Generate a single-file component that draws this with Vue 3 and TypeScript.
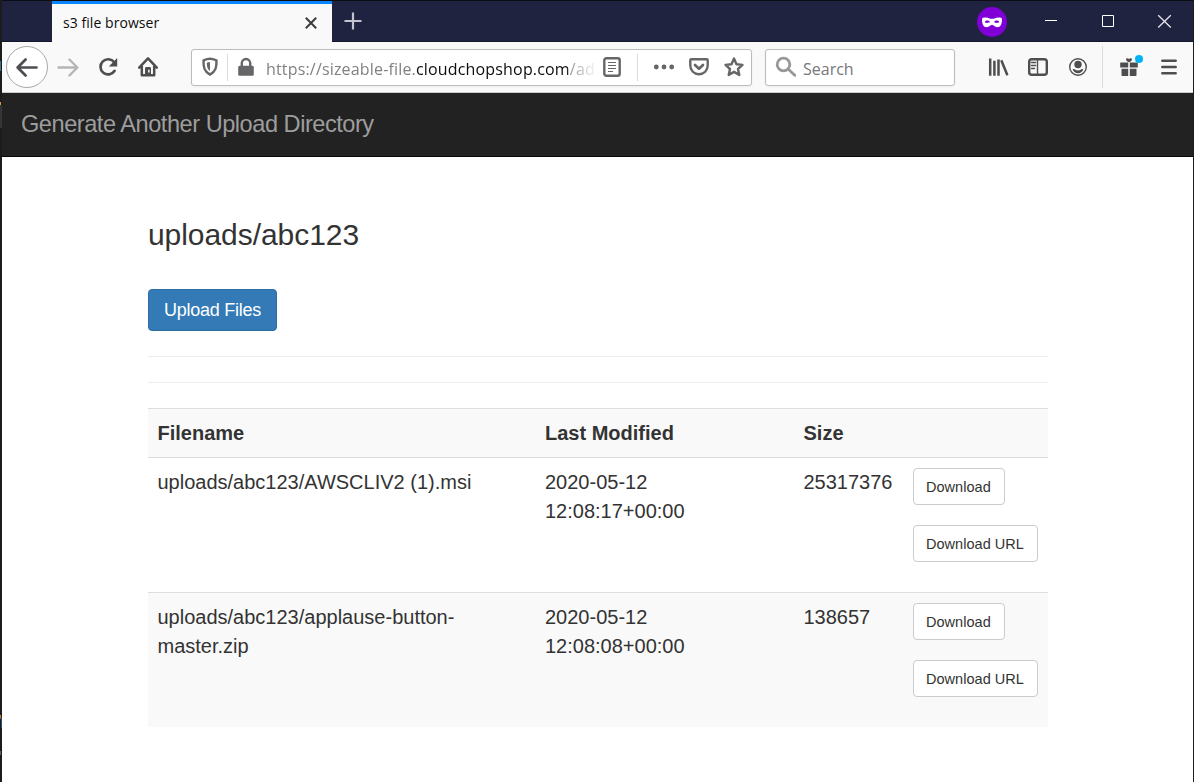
<script setup lang="ts">
interface FileRow {
  name: string
  modified: string
  size: string
}

const files: FileRow[] = [
  { name: 'uploads/abc123/AWSCLIV2 (1).msi', modified: '2020-05-12 12:08:17+00:00', size: '25317376' },
  { name: 'uploads/abc123/applause-button-master.zip', modified: '2020-05-12 12:08:08+00:00', size: '138657' },
]
</script>

<template>
  <div class="window">
    <header class="titlebar">
      <div class="tab">
        <span class="tab-title">s3 file browser</span>
        <svg class="tab-close" width="14" height="14" viewBox="0 0 14 14"><path d="M1.800 1.800 12.200 12.200M12.200 1.800 1.800 12.200" /></svg>
      </div>
      <svg class="new-tab" width="18" height="18" viewBox="0 0 18 18"><path d="M9 .5v17M.5 9h17" /></svg>
      <div class="controls">
        <svg class="mask" width="30" height="30" viewBox="0 0 30 30">
          <circle cx="15" cy="15" r="15" fill="#8000d7" />
          <path fill="#fff" fill-rule="evenodd" d="M5 12.200C5 10.700 6.500 10.400 8.500 10.400c3 0 4 1.400 6.500 1.400s3.500-1.400 6.500-1.400c2 0 3.500.3 3.500 1.800 0 4.500-1.300 8-4.800 8-2.600 0-3.400-2.400-5.200-2.400s-2.600 2.400-5.200 2.400C6.300 20.200 5 16.700 5 12.200ZM7.800 15c.8 1.200 4.200 1.200 5 0-.8-1.900-4.200-1.900-5 0Zm9.400 0c.8 1.200 4.200 1.200 5 0-.8-1.900-4.200-1.900-5 0Z" />
        </svg>
        <svg class="ctl" width="57" height="40" viewBox="0 0 57 40"><path d="M23 19.500h12" /></svg>
        <svg class="ctl" width="57" height="40" viewBox="0 0 57 40"><path d="M23.500 14.500h11v11h-11z" /></svg>
        <svg class="ctl thin" width="57" height="40" viewBox="0 0 57 40"><path d="M22.200 14.200 34.800 26.500M34.800 14.200 22.200 26.500" /></svg>
      </div>
    </header>

    <nav class="toolbar">
      <span class="back">
        <svg width="24" height="24" viewBox="0 0 24 24"><path class="line heavy" d="M21.500 12.500H3M10.600 4.500 2.600 12.500l8 8" /></svg>
      </span>
      <span class="slot">
        <svg class="dim" width="24" height="24" viewBox="0 0 24 24"><path class="line" d="M2.500 12.500H21M13.400 4.500l8 8-8 8" /></svg>
      </span>
      <span class="slot">
        <svg width="24" height="24" viewBox="0 0 24 24"><path class="line heavy" d="M18.600 15.800A7.600 7.600 0 1 1 18.200 7.300" /><path class="solid" d="M21.200 3v8.400h-8.400Z" /></svg>
      </span>
      <span class="slot">
        <svg width="24" height="24" viewBox="0 0 24 24"><path class="line home" d="M3.200 12.600 12 3.400l8.800 9.200M5.800 11.500v8.700h12.400v-8.700" /><path class="solid" d="M9 13.500c0-1 .5-1.500 1.500-1.500h3c1 0 1.500.5 1.500 1.500V20H9Z" /><path fill="#f9f9fa" d="M12.100 14.800h1.500v2.800h-1.500z" /></svg>
      </span>

      <div class="field urlbar">
        <svg class="shield" width="18" height="20" viewBox="0 0 18 20"><path class="line" d="M9 1.800c2.100 0 4.400.7 6.500 1.500.2 6.900-.7 11.100-6.500 14.300C3.200 14.400 2.300 10.200 2.500 3.300 4.600 2.500 6.900 1.800 9 1.800Z" /><path class="solid" d="M9 5v9.100C6.300 12 5.800 9.600 5.800 5.700 6.800 5.300 7.900 5 9 5Z" /></svg>
        <span class="bar first"></span>
        <svg class="lock" width="18" height="20" viewBox="0 0 18 20"><path class="line" d="M4.800 10V6.200a4.200 4.200 0 0 1 8.400 0V10" /><rect class="solid" x="1.200" y="8.800" width="15.600" height="10" rx="1.500" /></svg>
        <div class="url">https://sizeable-file.<span class="host">cloudchopshop.com</span>/ad</div>
        <svg class="reader" width="18" height="20" viewBox="0 0 18 20"><rect class="line" x="1.300" y="1.300" width="15.400" height="17.400" rx="2" /><path class="line fine" d="M5 5.500h8M5 8.500h8M5 11.500h8M5 14.500h5" /></svg>
        <span class="bar second"></span>
        <svg class="dots" width="22" height="20" viewBox="0 0 22 20"><circle class="solid" cx="3.300" cy="10" r="2.400" /><circle class="solid" cx="11" cy="10" r="2.400" /><circle class="solid" cx="18.700" cy="10" r="2.400" /></svg>
        <svg class="pocket" width="22" height="20" viewBox="0 0 22 20"><path class="line" d="M3.300 2.300h15.400c.6 0 1 .4 1 1V8.500c0 5-3.700 8.700-8.700 8.700S2.300 13.500 2.300 8.500V3.300c0-.6.400-1 1-1Z" /><path class="line heavy" d="M7 7.900l4 3.800 4-3.800" /></svg>
        <svg class="star" width="22" height="22" viewBox="0 0 22 22"><path class="line" d="m11 2.500 2.500 5.700 6 .7-4.500 4.100 1.300 6-5.300-3.100-5.300 3.100 1.300-6L2.500 8.900l6-.7Z" /></svg>
      </div>

      <div class="field search">
        <svg width="22" height="22" viewBox="0 0 22 22"><circle class="line" cx="8.500" cy="8.500" r="6.300" /><path class="line" d="m13.300 13.300 6.500 6" /></svg>
        <span>Search</span>
      </div>

      <span class="slot library">
        <svg width="24" height="24" viewBox="0 0 24 24"><path class="books" d="M4.200 3.500v17.200M8.400 5.800v14.900M12.500 4.500v16.200M15.300 5.300l6.100 15" /></svg>
      </span>
      <span class="slot">
        <svg width="24" height="24" viewBox="0 0 24 24"><rect class="line" x="3.200" y="4.200" width="17.600" height="15.600" rx="2.600" /><path class="line slim" d="M11.500 4v16M5.500 7.500h4M5.500 10.500h4M5.500 13.500h3" /></svg>
      </span>
      <span class="slot">
        <svg width="24" height="24" viewBox="0 0 24 24"><circle class="line slim" cx="12" cy="12" r="8.300" /><circle class="solid" cx="12" cy="9.500" r="3.700" /><path class="solid" d="M6.700 14.200c.7-.3 1.600-.2 2.200.3 1.800 1.400 4.400 1.400 6.200 0 .6-.5 1.500-.6 2.200-.3-.8 2.400-2.900 4-5.300 4s-4.500-1.600-5.300-4Z" /></svg>
      </span>
      <span class="separator"></span>
      <span class="slot gift">
        <svg width="24" height="24" viewBox="0 0 24 24"><path class="solid" d="M3.700 7.500h7.500v5H3.200V8c0-.3.200-.5.500-.5ZM12.800 7.500h7.500c.3 0 .5.200.5.500v4.500h-8ZM4.500 13.700h6.700V21H5.300c-.5 0-.8-.3-.8-.8ZM12.800 13.700h6.700v6.500c0 .5-.3.800-.8.800h-5.900ZM12 7.300c-2-.9-3.200-2-3-3.100.3-1.400 2.300-1.400 3-.1.700-1.300 2.700-1.300 3 .1.200 1.100-1 2.200-3 3.100Z" /></svg>
        <i class="badge"></i>
      </span>
      <span class="slot">
        <svg width="24" height="24" viewBox="0 0 24 24"><path class="line menu" d="M5.300 5.700h13.400M5.300 12h13.400M5.300 18.200h13.400" /></svg>
      </span>
    </nav>

    <div class="navbar">Generate Another Upload Directory</div>

    <main class="container">
      <h3>uploads/abc123</h3>
      <button class="upload">Upload Files</button>
      <hr class="rule">
      <hr class="rule">
      <table>
        <thead>
          <tr><th class="c-name">Filename</th><th class="c-date">Last Modified</th><th class="c-size">Size</th><th></th></tr>
        </thead>
        <tbody>
          <tr v-for="file in files" :key="file.name">
            <td>{{ file.name }}</td>
            <td>{{ file.modified }}</td>
            <td>{{ file.size }}</td>
            <td class="actions">
              <button>Download</button>
              <button>Download URL</button>
            </td>
          </tr>
        </tbody>
      </table>
    </main>
  </div>
</template>

<style>
html {
  background:
    linear-gradient(#d89a35, #d89a35) 0 102px / 1px 3px no-repeat,
    linear-gradient(#3f6f8c, #3f6f8c) 0 61px / 1px 10px no-repeat,
    linear-gradient(#e0a030, #b03a20) 0 715px / 1px 4px no-repeat,
    linear-gradient(#29506b, #29506b) 1px 717px / 1px 11px no-repeat,
    linear-gradient(#5f6265, #5f6265) 0 751px / 1px 4px no-repeat,
    linear-gradient(#353535, #353535) 0 105px / 2px 23px no-repeat,
    #1c1c1d;
}
body { margin: 0; overflow: hidden; }
</style>

<style scoped>
* { box-sizing: border-box; }
.window {
  width: 1191px; height: 782px; margin-left: 2px; background: #fff;
  font-family: "Liberation Sans", Arial, sans-serif; color: #333;
}
svg { display: block; flex: none; fill: none; }

.titlebar { display: flex; align-items: stretch; height: 42px; background: #202340; border-top: 1px solid #0b0c14; border-bottom: 1px solid #14162b; padding-left: 50px; }
.tab { width: 280px; height: 41px; background: #f9f9fa; border-top: 3px solid #0a84ff; display: flex; align-items: center; justify-content: space-between; padding: 0 14px 2px 11px; }
.tab-title { font: 14px "Open Sans", "Noto Sans", sans-serif; color: #0c0c0d; letter-spacing: 0.06px; }
.tab-close { stroke: #3c3c3e; stroke-width: 2; margin-top: 1px; }
.new-tab { margin: 11px 0 0 12px; stroke: #c3c3cf; stroke-width: 2.2; }
.controls { display: flex; margin-left: auto; }
.mask { margin: 6px 15px 0 0; }
.ctl { stroke: #fff; stroke-width: 1; }
.ctl.thin { stroke: #e4e4e9; stroke-width: 1.3; }

.toolbar { height: 51px; background: #f9f9fa; border-bottom: 1px solid #ccc; display: flex; align-items: center; padding-left: 4px; color: #4e4e50; }
.line { stroke: currentColor; stroke-width: 2.4; stroke-linecap: round; stroke-linejoin: round; fill: none; }
.heavy { stroke-width: 2.7; }
.home { stroke-width: 2.5; }
.slim { stroke-width: 1.4; }
.fine { stroke-width: 1.2; stroke-linecap: butt; }
.menu { stroke-width: 2.5; }
.solid { fill: currentColor; }
.books { stroke: currentColor; stroke-width: 2.5; }
.dim { color: #b5b5b6; }
.back { width: 42px; height: 42px; border: 1px solid #a9a9aa; border-radius: 50%; background: #fff; display: grid; place-items: center; flex: none; }
.slot { width: 40px; height: 40px; display: grid; place-items: center; flex: none; position: relative; }
.field { height: 37px; border: 1px solid #bcbcbd; border-radius: 3px; background: #fff; display: flex; align-items: center; box-shadow: 0 1px 3px rgba(0, 0, 0, .05); flex: none; font: 16px "Open Sans", "Noto Sans", sans-serif; }
.urlbar { width: 561px; margin-left: 23px; color: #666668; padding-left: 9px; }
.bar { width: 1px; height: 27px; background: #dcdcdd; flex: none; }
.bar.first { margin: 0 9px 0 8px; }
.lock { margin-right: 11px; }
.url { width: 329px; line-height: 24px; margin-top: 3px; white-space: nowrap; color: #818183; letter-spacing: .17px; -webkit-mask-image: linear-gradient(to right, #000 298px, transparent 332px); mask-image: linear-gradient(to right, #000 298px, transparent 332px); }
.host { color: #0c0c0d; }
.reader { margin-left: 8px; }
.bar.second { margin: 0 15px 0 16px; }
.pocket { margin-left: 13px; }
.star { margin-left: 13px; }
.search { width: 190px; margin-left: 13px; padding-left: 9px; color: #777779; }
.search svg { color: #98989a; margin-right: 6px; }
.search .line { stroke-width: 2.8; }
.search span { margin-top: 3px; }
.library { margin-left: 23px; }
.separator { width: 1px; height: 42px; background: #dcdcdd; margin: 0 6px 0 4px; }
.badge { position: absolute; left: 26px; top: 8px; width: 8px; height: 8px; border-radius: 50%; background: #00b3f4; }

.navbar { height: 64px; background: #222; border-bottom: 1px solid #080808; color: #9d9d9d; font-size: 23.600px; line-height: 62px; padding-left: 19px; letter-spacing: -.48px; }

.container { width: 900px; margin-left: 146px; padding-top: 61px; }
h3 { margin: 0; font-size: 30px; font-weight: 400; line-height: 34px; letter-spacing: -.06px; }
.upload { display: block; margin: 37px 0 25px; width: 129px; height: 42px; padding: 0; border: 1px solid #2e6da4; border-radius: 4px; background: #337ab7; color: #fff; font: 18px "Liberation Sans", Arial, sans-serif; letter-spacing: -.25px; }
.rule { margin: 0 0 25px; border: 0; height: 1px; background: #eee; }
table { width: 900px; table-layout: fixed; border-collapse: separate; border-spacing: 0; font-size: 20px; line-height: 29px; }
th { text-align: left; }
.c-name { width: 387.500px; }
.c-date { width: 258.500px; }
.c-size { width: 109px; }
th, td { border-top: 1px solid #ddd; padding: 10px 10px 9px 9.500px; vertical-align: top; }
td { height: 135px; padding-bottom: 0; }
td:first-child { padding-right: 60px; }
td:nth-child(2) { padding-right: 60px; }
thead tr, tbody tr:nth-child(even) { background: #f9f9f9; }
.actions { padding-left: 10px; }
.actions button { display: block; margin: 0 0 20px; height: 37px; padding: 0 13px 0 12px; border: 1px solid #ccc; border-radius: 4px; background: #fff; color: #333; font: 14.500px "Liberation Sans", Arial, sans-serif; letter-spacing: .03px; white-space: nowrap; }
</style>
